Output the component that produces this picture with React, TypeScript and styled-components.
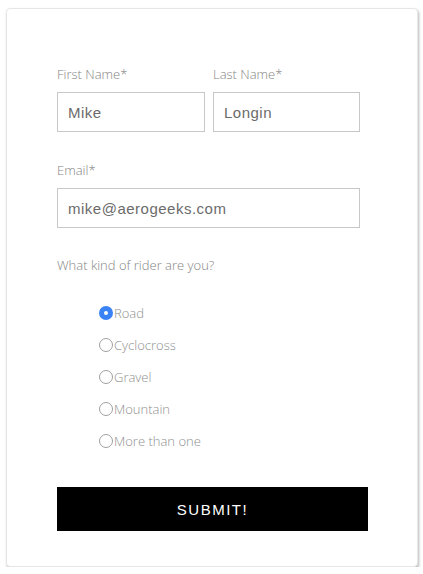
import React from "react";
import styled, { createGlobalStyle } from "styled-components";

const Global = createGlobalStyle`
  html, body { margin: 0; padding: 0; background: #ffffff; }
  * { box-sizing: border-box; }
`;

const Card = styled.form`
  margin: 8px 0 0 6px;
  width: 412px;
  height: 559px;
  background: #fff;
  border: 1px solid #e6e6e6;
  border-radius: 4px;
  box-shadow: 1px 2px 3px rgba(0, 0, 0, 0.28);
  padding: 56px 0 0 50px;
  display: flex;
  flex-direction: column;
`;

const Row = styled.div`
  display: flex;
  gap: 8px;
`;

const Field = styled.div<{ $w: number; $mb: number }>`
  display: flex;
  flex-direction: column;
  width: ${(p) => p.$w}px;
  margin-bottom: ${(p) => p.$mb}px;
`;

const Label = styled.label`
  font-family: "Open Sans", sans-serif;
  font-weight: 300;
  font-size: 13px;
  line-height: 18px;
  color: #858585;
  margin-bottom: 9px;
`;

const Input = styled.input`
  height: 40px;
  width: 100%;
  border: 1px solid #c8c8c8;
  border-radius: 0;
  padding: 0 10px;
  font-family: "Liberation Sans", Arial, sans-serif;
  font-size: 15px;
  letter-spacing: 0.5px;
  color: #6b6b6b;
  outline: none;
`;

const Question = styled.div`
  font-family: "Open Sans", sans-serif;
  font-weight: 300;
  font-size: 13px;
  line-height: 18px;
  color: #858585;
`;

const Options = styled.div`
  display: flex;
  flex-direction: column;
  gap: 14px;
  padding: 30px 0 0 42px;
`;

const Option = styled.label`
  display: flex;
  align-items: center;
  height: 18px;
  font-family: "Open Sans", sans-serif;
  font-weight: 300;
  font-size: 13px;
  color: #8f8f8f;
`;

const Dot = styled.span<{ $on?: boolean }>`
  width: 14px;
  height: 14px;
  border-radius: 50%;
  margin-right: 1px;
  flex: none;
  background: ${(p) => (p.$on ? "#3b82f6" : "#fff")};
  border: ${(p) => (p.$on ? "none" : "1px solid #a0a0a0")};
  display: flex;
  align-items: center;
  justify-content: center;
  &::after {
    content: "";
    display: ${(p) => (p.$on ? "block" : "none")};
    width: 4px;
    height: 4px;
    border-radius: 50%;
    background: #fff;
  }
`;

const Submit = styled.button`
  margin-top: 37px;
  width: 311px;
  height: 44px;
  background: #000;
  color: #fff;
  border: none;
  font-family: "Liberation Sans", Arial, sans-serif;
  font-size: 15px;
  letter-spacing: 1.5px;
  padding: 0;
`;

const options = ["Road", "Cyclocross", "Gravel", "Mountain", "More than one"];

export default function App() {
  return (
    <>
      <Global />
      <Card onSubmit={(e) => e.preventDefault()}>
        <Row>
          <Field $w={148} $mb={29}>
            <Label>First Name*</Label>
            <Input defaultValue="Mike" />
          </Field>
          <Field $w={147} $mb={29}>
            <Label>Last Name*</Label>
            <Input defaultValue="Longin" />
          </Field>
        </Row>
        <Field $w={303} $mb={28}>
          <Label>Email*</Label>
          <Input defaultValue="mike@aerogeeks.com" />
        </Field>
        <Question>What kind of rider are you?</Question>
        <Options>
          {options.map((o, i) => (
            <Option key={o}>
              <Dot $on={i === 0} />
              {o}
            </Option>
          ))}
        </Options>
        <Submit type="submit">SUBMIT!</Submit>
      </Card>
    </>
  );
}
